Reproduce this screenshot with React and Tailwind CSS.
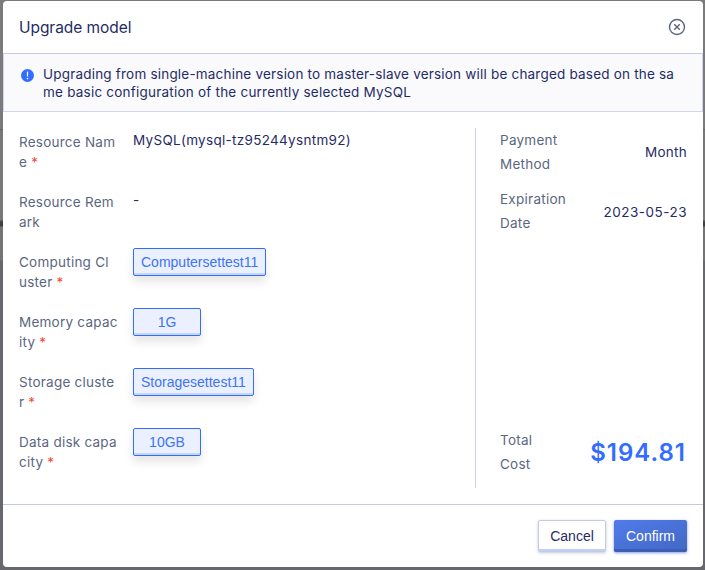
import React from "react";

function Label({ lines, required }) {
  return (
    <div className="w-[114px] shrink-0 pt-1 text-[13.5px] leading-5 tracking-[0.24px] whitespace-nowrap text-[#5a6780]">
      <div>{lines[0]}</div>
      <div>
        {lines[1]}
        {required && <span className="ml-1 text-[#f5483b]">*</span>}
      </div>
    </div>
  );
}

function Option({ children }) {
  return (
    <div className="flex h-7 min-w-[68px] items-center justify-center rounded-[2px] border border-[#336dff] bg-[#ebf0ff] px-[7px] font-['Liberation_Sans',Arial,sans-serif] text-[14px] text-[#3d73f5] shadow-[inset_0_-2px_0_0_#c8d7f8,0_6px_10px_0_rgba(0,0,0,0.1)]">
      {children}
    </div>
  );
}

function Row({ lines, required, children }) {
  return (
    <div className="flex h-[60px] items-start">
      <Label lines={lines} required={required} />
      {children}
    </div>
  );
}

function Summary({ lines, children }) {
  return (
    <div className="flex items-center justify-between text-[13.5px] leading-6 tracking-[0.26px] text-[#5a6780]">
      <div>
        <div>{lines[0]}</div>
        <div>{lines[1]}</div>
      </div>
      {children}
    </div>
  );
}

export default function App() {
  return (
    <div className="h-[570px] w-[705px] overflow-hidden bg-[linear-gradient(180deg,#7b7b7b_0,#7b7b7b_129px,#666666_129px,#666666_130px,#787878_130px,#787878_220px,#606060_220px,#606060_221px,#404040_222px,#404040_226px,#747474_227px,#747474_260px,#67686d_261px,#67686d_100%)] pt-px pl-[3px] font-['Inter',sans-serif]">
      <div className="flex h-[566px] w-[700px] flex-col rounded-[4px] bg-white text-[#1f2d64]">
        <header className="flex h-[52px] shrink-0 items-center justify-between px-4">
          <h1 className="pt-px text-[15.5px] leading-6 tracking-[-0.06px]">Upgrade model</h1>
          <svg width="18" height="18" viewBox="0 0 18 18" fill="none" stroke="#5a6780" strokeWidth="1.4" className="mr-px">
            <circle cx="9" cy="9" r="7.5" />
            <path d="M6.2 6.2l5.6 5.6M11.8 6.2l-5.6 5.6" />
          </svg>
        </header>
        <div className="flex h-[59px] shrink-0 border border-[#d0d4ec] border-t-[#c6cae4] bg-[#fafafd] pt-[11px] pl-[17px]">
          <svg width="13" height="13" viewBox="0 0 13 13" className="mt-[4px] mr-[9px] shrink-0">
            <circle cx="6.5" cy="6.5" r="6.5" fill="#336dff" />
            <path d="M6.5 2.5v5" stroke="#fff" strokeWidth="1.2" />
            <circle cx="6.5" cy="9.6" r="0.8" fill="#fff" />
          </svg>
          <div className="text-[13.5px] leading-[18px] whitespace-nowrap">
            <div className="tracking-[0.2px]">Upgrading from single-machine version to master-slave version will be charged based on the sa</div>
            <div className="tracking-[0.22px]">me basic configuration of the currently selected MySQL</div>
          </div>
        </div>
        <main className="flex h-[392px] shrink-0 pt-4">
          <section className="h-[360px] w-[473px] shrink-0 border-r border-[#cfd3ea] pl-4">
            <Row lines={["Resource Nam", "e"]} required>
              <span className="pt-0.5 text-[13.5px] leading-5 tracking-[0.3px]">MySQL(mysql-tz95244ysntm92)</span>
            </Row>
            <Row lines={["Resource Rem", "ark"]}>
              <span className="pt-0.5 text-[13.5px] leading-5 tracking-[0.3px]">-</span>
            </Row>
            <Row lines={["Computing Cl", "uster"]} required>
              <Option>Computersettest11</Option>
            </Row>
            <Row lines={["Memory capac", "ity"]} required>
              <Option>1G</Option>
            </Row>
            <Row lines={["Storage cluste", "r"]} required>
              <Option>Storagesettest11</Option>
            </Row>
            <Row lines={["Data disk capa", "city"]} required>
              <Option>10GB</Option>
            </Row>
          </section>
          <section className="flex h-[348px] flex-1 flex-col pr-4 pl-6">
            <Summary lines={["Payment", "Method"]}>
              <span className="text-[#1f2d64]">Month</span>
            </Summary>
            <div className="mt-[11px]">
              <Summary lines={["Expiration", "Date"]}>
                <span className="pt-px tracking-[0.5px] text-[#1f2d64]">2023-05-23</span>
              </Summary>
            </div>
            <div className="mt-auto">
              <Summary lines={["Total", "Cost"]}>
                <span className="pt-px pr-px text-[24px] font-semibold tracking-[1px] text-[#336dff]">$194.81</span>
              </Summary>
            </div>
          </section>
        </main>
        <footer className="flex flex-1 justify-end gap-2 border-t border-[#c3c9e0] px-4 pt-[15px] font-['Liberation_Sans',Arial,sans-serif] text-[14px]">
          <button className="h-8 w-[68px] rounded-[2px] border border-[#c3c9e6] bg-white shadow-[inset_0_-2px_0_0_#c0d0f5,0_1px_3px_0_rgba(50,70,130,0.3)]">Cancel</button>
          <button className="h-8 w-[73px] rounded-[2px] bg-gradient-to-br from-[#507bea] to-[#4268c4] text-white shadow-[inset_0_-3px_0_0_#3c5eb4,0_1px_3px_0_rgba(51,90,220,0.6)]">Confirm</button>
        </footer>
      </div>
    </div>
  );
}
